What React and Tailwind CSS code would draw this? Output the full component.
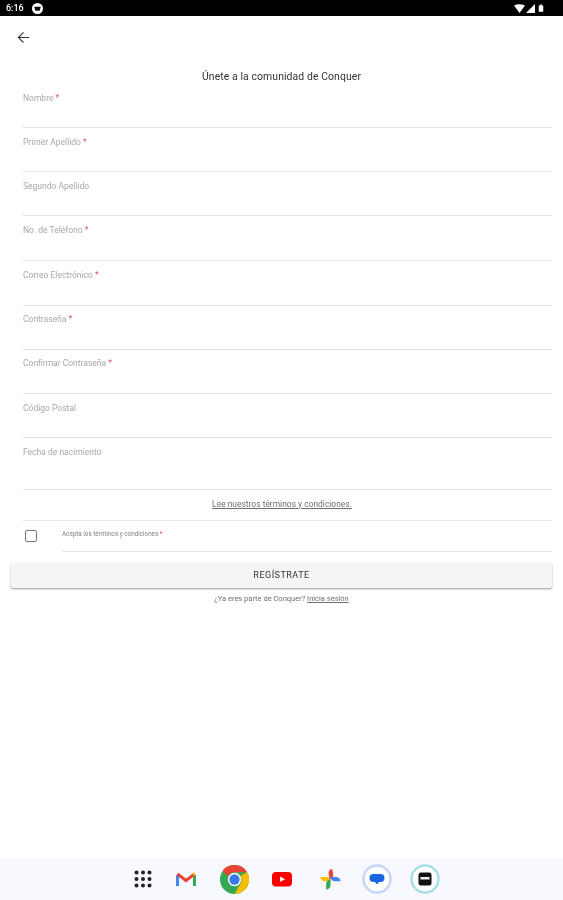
import React from "react";

const fields = [
  ["Nombre", true, "h-[38px]", "mt-[3px]"],
  ["Primer Apellido", true, "h-[44px]", "mt-[9px]"],
  ["Segundo Apellido", false, "h-[44px]", "mt-[9px]"],
  ["No. de Teléfono", true, "h-[45px]", "mt-[9px]"],
  ["Correo Electrónico", true, "h-[45px]", "mt-[9px]"],
  ["Contraseña", true, "h-[44px]", "mt-[8px]"],
  ["Confirmar Contraseña", true, "h-[44px]", "mt-[8px]"],
  ["Código Postal", false, "h-[44px]", "mt-[9px]"],
  ["Fecha de nacimiento", false, "h-[52px]", "mt-[9px]"],
];

function Apps() {
  const dots = [];
  for (let y = 0; y < 3; y++) for (let x = 0; x < 3; x++) dots.push(<circle key={`${x}${y}`} cx={2.5 + x * 6.5} cy={2.5 + y * 6.5} r="2" fill="#222" />);
  return <svg width="18" height="18" viewBox="0 0 18 18">{dots}</svg>;
}

function Gmail() {
  return (
    <svg width="20" height="16" viewBox="0 0 20 16" fill="none">
      <path d="M1.5 15V4" stroke="#4285f4" strokeWidth="3" />
      <path d="M18.5 15V4" stroke="#34a853" strokeWidth="3" />
      <path d="M1.5 3l8.5 6.5L18.5 3" stroke="#ea4335" strokeWidth="3" />
      <path d="M17 3.5l2-1" stroke="#fbbc04" strokeWidth="3" />
    </svg>
  );
}

function Chrome() {
  return (
    <svg width="29" height="29" viewBox="0 0 48 48">
      <circle cx="24" cy="24" r="24" fill="#34a853" />
      <path d="M24 0a24 24 0 0 1 20.8 12H24a12 12 0 0 0-11 7L4.2 9.700A24 24 0 0 1 24 0z" fill="#ea4335" />
      <path d="M44.800 12A24 24 0 0 1 24 48l10.400-18a12 12 0 0 0-1-12z" fill="#fbbc04" />
      <circle cx="24" cy="24" r="11" fill="#fff" />
      <circle cx="24" cy="24" r="8.500" fill="#3b78e7" />
    </svg>
  );
}

function Youtube() {
  return (
    <svg width="20" height="15" viewBox="0 0 20 15">
      <rect width="20" height="14.500" rx="4" fill="#f00" />
      <path d="M8 4.500l5 2.800-5 2.800z" fill="#fff" />
    </svg>
  );
}

function Photos() {
  return (
    <svg width="21" height="21" viewBox="0 0 24 24">
      <path d="M12 12H5.500A5.500 5.500 0 0 1 0.500 7H6.500A5.500 5.500 0 0 1 12 12z" fill="#fbbc04" transform="translate(0 2)" />
      <path d="M12 12V5.500A5.500 5.500 0 0 1 17 0.500V6.500A5.500 5.500 0 0 1 12 12z" fill="#ea4335" transform="translate(-1 0) rotate(-10 12 12)" />
      <path d="M12 12h6.500a5.500 5.500 0 0 1 5 5H17.500A5.500 5.500 0 0 1 12 12z" fill="#4285f4" transform="translate(0 -3)" />
      <path d="M12 12v6.500a5.500 5.500 0 0 1-5 5V17.500A5.500 5.500 0 0 1 12 12z" fill="#34a853" />
    </svg>
  );
}

function Messages() {
  return (
    <svg width="30" height="30" viewBox="0 0 30 30">
      <circle cx="15" cy="15" r="13.500" fill="#fff" stroke="#c6d6f6" strokeWidth="2.500" />
      <path d="M11.500 10h7a4 4 0 0 1 0 8h-1.500l-2 2.500-2-2.500h-1.500a4 4 0 0 1 0-8z" fill="#1a66e0" />
    </svg>
  );
}

function Last() {
  return (
    <svg width="30" height="30" viewBox="0 0 30 30">
      <circle cx="15" cy="15" r="13.500" fill="#fff" stroke="#a9dfe6" strokeWidth="2.500" />
      <rect x="8.500" y="8.500" width="13" height="13" rx="2.500" fill="#111" />
      <rect x="10.500" y="13" width="9" height="2.500" fill="#eee" />
    </svg>
  );
}

export default function App() {
  return (
    <div className="w-[563px] h-[900px] bg-white flex flex-col overflow-hidden font-['Roboto',sans-serif] blur-[0.5px]">
      <div className="h-[16px] shrink-0 bg-black flex items-center justify-between pl-[6px] pr-[19px] text-white">
        <div className="flex items-center gap-[8px]">
          <span className="text-[9px] font-medium leading-none">6:16</span>
          <svg width="11" height="11" viewBox="0 0 10 10">
            <circle cx="5" cy="5" r="5" fill="#fff" />
            <path d="M2 3.500h6L7 7H3z" fill="#111" />
          </svg>
        </div>
        <div className="flex items-center gap-[1px]">
          <svg width="11" height="9" viewBox="0 0 11 9"><path d="M0 1.500Q5.500-1 11 1.500L5.500 9z" fill="#fff" /></svg>
          <svg width="9" height="9" viewBox="0 0 9 9"><path d="M9 0v9H0z" fill="#fff" /></svg>
          <svg width="6" height="10" viewBox="0 0 8 10" className="ml-[2px]"><path d="M1 1.500h2V0h2v1.500h2v8.500H1z" fill="#fff" /></svg>
        </div>
      </div>

      <div className="h-[42px] shrink-0 flex items-center pl-[17px]">
        <svg width="13" height="13" viewBox="0 0 14 14" fill="none" stroke="#333" strokeWidth="1.200">
          <path d="M13 7H1.500M7 1.500 1.500 7 7 12.500" />
        </svg>
      </div>

      <div className="text-center text-[10.400px] leading-[12px] text-[#333] mt-[13px] tracking-[0.1px]">
        Únete a la comunidad de Conquer
      </div>

      <div className="pl-[23px] mt-[7px] pr-[11px] flex flex-col">
        {fields.map(([l, r, h, m]) => (
          <div key={l} className={`${h} border-b border-[#e2e2e2]`}>
            <div className={`text-[8.500px] leading-[10px] text-[#a8a8a8] ${m}`}>
              {l}
              {r && <span className="text-[#e05a5a]"> *</span>}
            </div>
          </div>
        ))}
        <div className="h-[31px] border-b border-[#e8e8e8] flex items-center justify-center pr-[11px] pb-[3px]">
          <span className="text-[8.450px] leading-[10px] text-[#707070] underline">Lee nuestros términos y condiciones.</span>
        </div>
      </div>

      <div className="flex pl-[25px] pr-[11px]">
        <div className="w-[37px] shrink-0 flex items-center pb-[1px]">
          <div className="w-[12px] h-[12px] border border-[#777] rounded-[2px]" />
        </div>
        <div className="flex-1 h-[31px] border-b border-[#e4e4e4] flex items-center text-[6.300px] text-[#808080] pb-[2px]">
          <span>Acepta los términos y condiciones <span className="text-[#e05a5a]">*</span></span>
        </div>
      </div>

      <button className="mx-[11px] mt-[11px] h-[25px] shrink-0 bg-[#f5f5f5] rounded-[2px] shadow-[0_1px_2px_rgba(0,0,0,0.4)] text-[9px] text-[#333] tracking-[0.5px]">
        REGÍSTRATE
      </button>

      <div className="mt-[7px] text-center text-[7.500px] leading-[8px] text-[#707070]">
        ¿Ya eres parte de Conquer? <span className="underline">Inicia sesión</span>
      </div>

      <div className="mt-auto h-[42px] shrink-0 bg-[#f8f9fe] flex items-center pl-[128px] gap-[18px]">
        <div className="w-[30px] flex justify-center mr-[-5px]"><Apps /></div>
        <div className="w-[30px] flex justify-center"><Gmail /></div>
        <div className="w-[30px] flex justify-center"><Chrome /></div>
        <div className="w-[30px] flex justify-center"><Youtube /></div>
        <div className="w-[30px] flex justify-center mr-[-1px]"><Photos /></div>
        <div className="w-[30px] flex justify-center"><Messages /></div>
        <div className="w-[30px] flex justify-center"><Last /></div>
      </div>
    </div>
  );
}
